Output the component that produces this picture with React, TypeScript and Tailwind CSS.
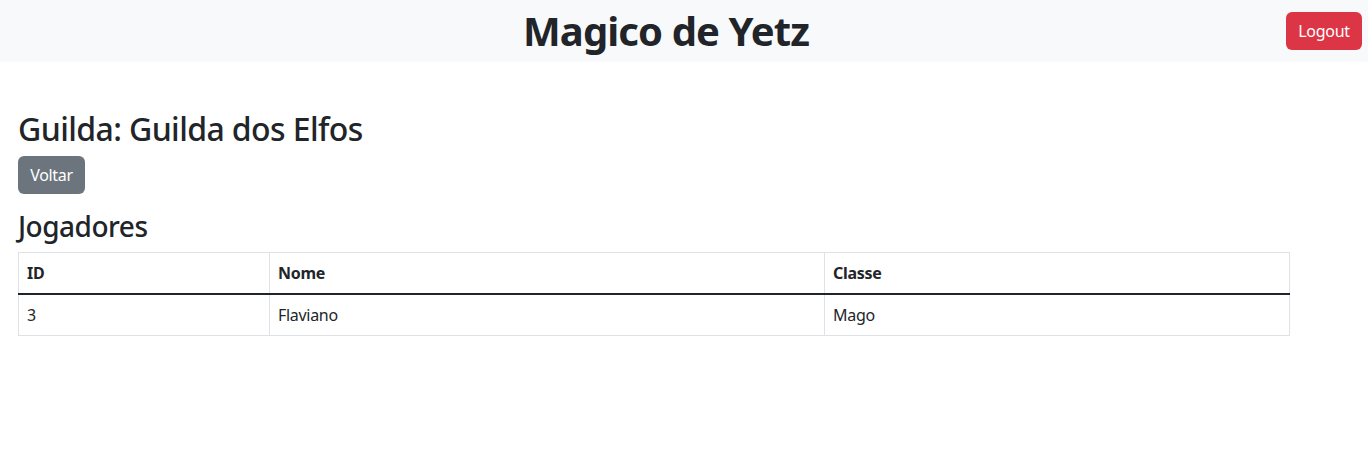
import React from "react";

type Jogador = { id: number; nome: string; classe: string };

const jogadores: Jogador[] = [{ id: 3, nome: "Flaviano", classe: "Mago" }];

const font = { fontFamily: '"Noto Sans", "Open Sans", sans-serif' };

const GuildaPage: React.FC = () => {
  return (
    <div className="min-h-screen bg-white text-[#212529]" style={font}>
      <header className="flex h-[62px] items-center bg-[#f8f9fa] px-[6px]">
        <h1 className="flex-1 pl-[40px] text-center text-[40px] font-bold leading-[1.2] tracking-[-0.9px]">
          Magico de Yetz
        </h1>
        <button
          type="button"
          className="h-[38px] w-[76px] rounded-[6px] bg-[#dc3545] text-[16px] tracking-[-0.3px] text-white"
        >
          Logout
        </button>
      </header>

      <main className="px-[18px] pt-[48px]">
        <h2 className="mb-[8px] text-[32px] font-medium leading-[1.2] tracking-[-0.6px]">
          Guilda: Guilda dos Elfos
        </h2>
        <button
          type="button"
          className="h-[38px] w-[67px] rounded-[6px] bg-[#6c757d] text-[16px] tracking-[-0.3px] text-white"
        >
          Voltar
        </button>

        <h3 className="mb-[8px] mt-[16px] text-[28px] font-medium leading-[1.2] tracking-[-0.5px]">Jogadores</h3>
        <table className="w-[1272px] border-collapse border border-[#dee2e6] text-[16px] leading-[24px] tracking-[-0.3px]">
          <thead>
            <tr className="border-b-2 border-[#212529]">
              <th className="w-[251px] border-r border-[#dee2e6] p-[8px] text-left font-bold">ID</th>
              <th className="w-[555px] border-r border-[#dee2e6] p-[8px] text-left font-bold">Nome</th>
              <th className="p-[8px] text-left font-bold">Classe</th>
            </tr>
          </thead>
          <tbody>
            {jogadores.map((j) => (
              <tr key={j.id} className="border-b border-[#dee2e6]">
                <td className="border-r border-[#dee2e6] p-[8px]">{j.id}</td>
                <td className="border-r border-[#dee2e6] p-[8px]">{j.nome}</td>
                <td className="p-[8px]">{j.classe}</td>
              </tr>
            ))}
          </tbody>
        </table>
      </main>
    </div>
  );
};

export default GuildaPage;
